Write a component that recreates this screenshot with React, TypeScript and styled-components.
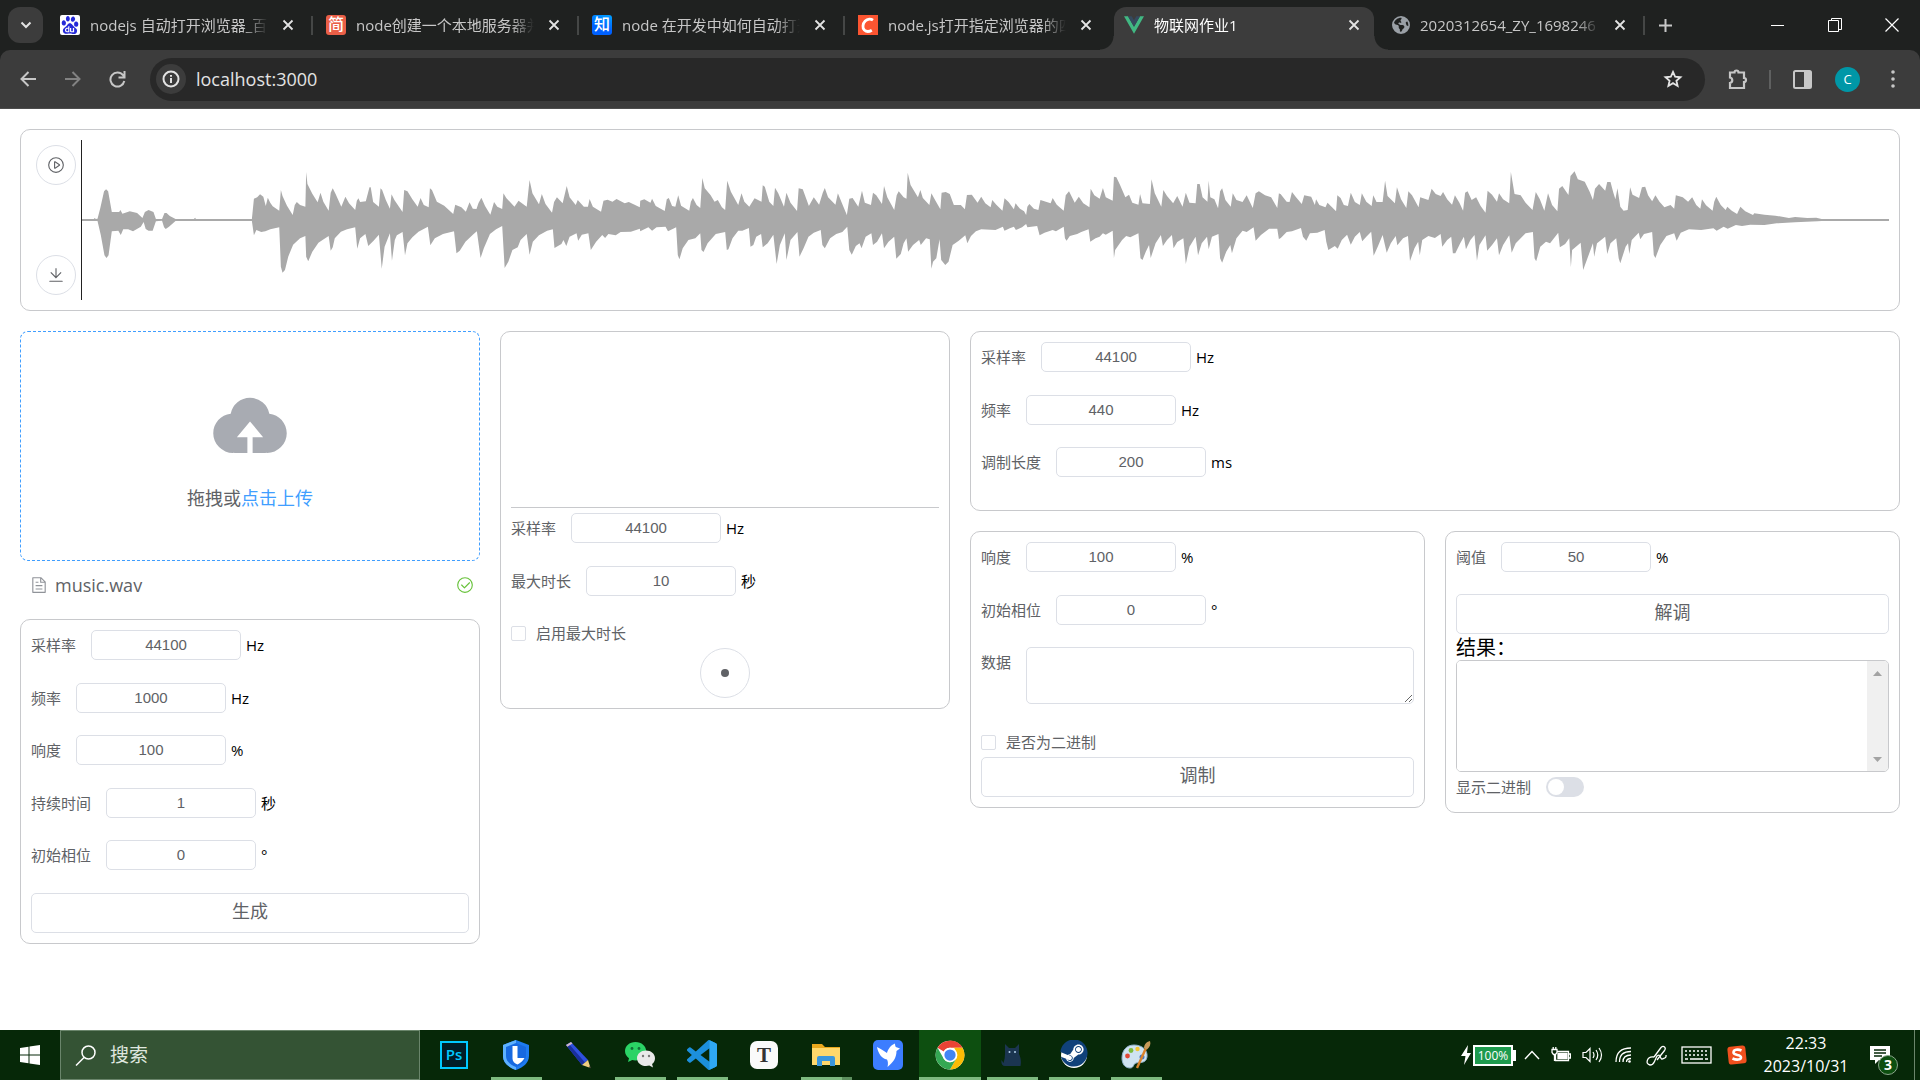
import React, { useId, useState } from 'react';
import styled, { createGlobalStyle, css } from 'styled-components';
import { SiBaidu } from 'react-icons/si';
import { FaSteam } from 'react-icons/fa';
import { FaEarthAmericas } from 'react-icons/fa6';

const uiFont = '"Open Sans", "Noto Sans CJK SC", sans-serif';
const valueFont = '"Liberation Sans", "Noto Sans CJK SC", sans-serif';

const GlobalStyle = createGlobalStyle`
  *, *::before, *::after { box-sizing: border-box; }
  body { margin: 0; background: #fff; font-family: ${uiFont}; }
  button, input, textarea { font: inherit; color: inherit; margin: 0; }
  button { padding: 0; border: 0; background: none; cursor: pointer; }
  svg { display: block; flex: none; }
`;

const Screen = styled.div`
  display: flex;
  flex-direction: column;
  min-height: 100vh;
`;

/* ---------- browser chrome ---------- */

const TabStrip = styled.div`
  display: flex;
  height: 50px;
  padding-left: 8px;
  background: #1f2120;
  color: #c7c7c7;
`;

const TabSearch = styled.button`
  display: grid;
  place-items: center;
  width: 35px;
  height: 36px;
  margin: 7px 7px 0 0;
  border-radius: 12px;
  background: #3c3c3c;
  color: #e3e3e3;
`;

const TabBox = styled.div<{ $active?: boolean; $divider?: boolean }>`
  position: relative;
  display: flex;
  align-items: center;
  flex: 0 1 266px;
  min-width: 0;
  height: 43px;
  margin-top: 7px;
  padding: 0 18px 8px 10px;
  ${p => p.$divider && css`
    &::after {
      content: '';
      position: absolute;
      right: 3px;
      top: 9px;
      width: 2px;
      height: 19px;
      background: #454746;
    }
  `}
  ${p => p.$active && css`
    flex-basis: 260px;
    margin-right: 8px;
    padding-right: 10px;
    border-radius: 12px 12px 0 0;
    background: #3c3c3c;
    color: #fff;
    &::before, &::after {
      content: '';
      position: absolute;
      bottom: 0;
      width: 14px;
      height: 14px;
    }
    &::before {
      left: -14px;
      background: radial-gradient(circle at 0 0, transparent 13px, #3c3c3c 14px);
    }
    &::after {
      right: -14px;
      background: radial-gradient(circle at 100% 0, transparent 13px, #3c3c3c 14px);
    }
  `}
`;

const TabTitle = styled.button`
  flex: 1;
  min-width: 0;
  margin-left: 10px;
  overflow: hidden;
  white-space: nowrap;
  text-align: left;
  font-size: 15px;
  line-height: 24px;
  mask-image: linear-gradient(to right, #000 calc(100% - 24px), transparent);
`;

const TabClose = styled.button`
  display: grid;
  place-items: center;
  width: 20px;
  height: 20px;
  margin-left: 10px;
  color: #e3e3e3;
`;

const NewTab = styled.button`
  display: grid;
  place-items: center;
  width: 34px;
  height: 50px;
`;

const WindowControls = styled.div`
  display: flex;
  margin-left: auto;
  color: #fff;
`;

const WindowButton = styled.button`
  display: grid;
  place-items: center;
  width: 57px;
  height: 50px;
`;

const ToolbarBack = styled.div`
  background: #1f2120;
`;

const Toolbar = styled.div`
  display: flex;
  align-items: center;
  height: 59px;
  padding: 0 5px;
  border-radius: 10px 10px 0 0;
  border-bottom: 1px solid #4d4d4d;
  background: #3c3c3c;
  color: #c7c7c7;
`;

const ToolButton = styled.button<{ $dim?: boolean }>`
  display: grid;
  place-items: center;
  width: 45px;
  height: 40px;
  opacity: ${p => (p.$dim ? 0.5 : 1)};
`;

const Omnibox = styled.div`
  display: flex;
  align-items: center;
  flex: 1;
  height: 43px;
  margin: 0 10px;
  padding: 0 22px 0 6px;
  border-radius: 22px;
  background: #282828;
  color: #e3e3e3;
`;

const SiteInfo = styled.button`
  display: grid;
  place-items: center;
  width: 30px;
  height: 30px;
  border-radius: 50%;
  background: #3c3c3c;
`;

const Address = styled.input`
  flex: 1;
  min-width: 0;
  margin-left: 10px;
  padding: 0;
  border: 0;
  outline: 0;
  background: none;
  font-size: 18px;
  line-height: 26px;
`;

const ToolDivider = styled.span`
  width: 2px;
  height: 19px;
  margin: 0 9px;
  background: #5f6060;
`;

const Avatar = styled.button`
  width: 25px;
  height: 25px;
  margin: 0 10px;
  border-radius: 50%;
  background: #0097a7;
  color: #fff;
  font-size: 13px;
  line-height: 25px;
`;

/* ---------- page ---------- */

const Page = styled.main`
  flex: 1;
  padding: 20px;
`;

const Card = styled.section`
  padding: 10px;
  border: 1px solid #c8c9cc;
  border-radius: 10px;
  background: #fff;
`;

const Player = styled(Card)`
  display: flex;
  padding: 10px 10px 10px 15px;
  margin-bottom: 20px;
`;

const PlayerButtons = styled.div`
  display: flex;
  flex-direction: column;
  justify-content: space-between;
  height: 160px;
  padding: 5px 5px 5px 0;
`;

const RoundButton = styled.button<{ $size: number }>`
  display: grid;
  place-items: center;
  width: ${p => p.$size}px;
  height: ${p => p.$size}px;
  border: 1px solid #dcdfe6;
  border-radius: 50%;
  color: #606266;
`;

const Playhead = styled.span`
  width: 1px;
  height: 160px;
  background: #222;
`;

const WaveSvg = styled.svg`
  flex: 1;
  min-width: 0;
  height: 160px;
`;

const Columns = styled.div`
  display: grid;
  grid-template-columns: 46fr 45fr 93fr;
  gap: 20px;
  align-items: start;
`;

const Stack = styled.div`
  display: grid;
  gap: 20px;
  min-width: 0;
`;

const Halves = styled.div`
  display: grid;
  grid-template-columns: 1fr 1fr;
  gap: 20px;
  align-items: start;
`;

const DropZone = styled.div`
  display: flex;
  flex-direction: column;
  align-items: center;
  gap: 20px;
  padding: 50px 10px;
  border: 1px dashed #409eff;
  border-radius: 8px;
  color: #606266;
  font-size: 18px;
  line-height: 24px;
`;

const UploadLink = styled.a`
  color: #409eff;
  text-decoration: none;
`;

const FileRow = styled.div`
  display: flex;
  align-items: center;
  gap: 7px;
  height: 32px;
  margin: 8px 0 18px;
  padding: 0 6px 0 10px;
  color: #606266;
  font-size: 18px;

  svg:last-child { margin-left: auto; }
`;

const Fields = styled.div<{ $minHeight: number }>`
  display: grid;
  grid-auto-rows: 1fr;
  min-height: ${p => p.$minHeight}px;
`;

const FieldRow = styled.div`
  display: flex;
  align-items: flex-start;
  min-height: 30px;
  font-size: 15px;
  line-height: 30px;
`;

const Label = styled.label`
  flex: none;
  padding-right: 15px;
  color: #606266;
`;

const NumberBox = styled.input`
  width: 150px;
  height: 30px;
  margin-right: 5px;
  padding: 0 8px;
  border: 1px solid #dcdfe6;
  border-radius: 5px;
  color: #606266;
  text-align: center;
  font-family: ${valueFont};
`;

const Unit = styled.span`
  color: #000;
`;

const DataRow = styled(FieldRow)`
  margin-bottom: 23px;
`;

const DataBox = styled.textarea`
  flex: 1;
  min-width: 0;
  height: 57px;
  padding: 4px 8px;
  border: 1px solid #dcdfe6;
  border-radius: 5px;
  color: #606266;
  line-height: 24px;
  resize: vertical;
`;

const CheckRow = styled.label`
  display: flex;
  align-items: center;
  gap: 10px;
  height: 30px;
  color: #606266;
  font-size: 15px;
  line-height: 30px;
`;

const CheckBox = styled.input`
  appearance: none;
  width: 15px;
  height: 15px;
  border: 1px solid #dcdfe6;
  border-radius: 2px;
  background: #fff;
  &:checked { background: #409eff; border-color: #409eff; }
`;

const WideButton = styled.button`
  display: block;
  width: 100%;
  height: 40px;
  padding-bottom: 4px;
  border: 1px solid #dcdfe6;
  border-radius: 5px;
  color: #606266;
  font-size: 18px;
  line-height: 34px;
`;

const Scope = styled.div`
  height: 166px;
  margin-bottom: 5px;
  border-bottom: 1px solid #c8c9cc;
`;

const RecordArea = styled.div`
  display: flex;
  justify-content: center;
`;

const Dot = styled.span`
  width: 8px;
  height: 8px;
  border-radius: 50%;
  background: #606266;
`;

const ResultLabel = styled.label`
  display: block;
  padding-top: 2px;
  color: #000;
  font-size: 20px;
  line-height: 24px;
`;

const ResultFrame = styled.div`
  display: flex;
  height: 112px;
  border: 1px solid #c8c9cc;
  border-radius: 5px;
  overflow: hidden;
`;

const ResultBox = styled.textarea`
  flex: 1;
  min-width: 0;
  border: 0;
  outline: 0;
  resize: none;
  font-size: 15px;
`;

const ScrollRail = styled.div`
  display: flex;
  flex-direction: column;
  justify-content: space-between;
  width: 21px;
  background: #f0f0f0;
  color: #a3a3a3;
`;

const ScrollArrow = styled.button`
  display: grid;
  place-items: center;
  height: 24px;
`;

const SwitchRow = styled.label`
  display: flex;
  align-items: center;
  gap: 15px;
  height: 30px;
  color: #606266;
  font-size: 15px;
  line-height: 30px;
`;

const Switch = styled.input`
  appearance: none;
  display: flex;
  align-items: center;
  width: 38px;
  height: 20px;
  padding: 0 2px;
  border-radius: 10px;
  background: #dcdfe6;
  &::before {
    content: '';
    width: 16px;
    height: 16px;
    border-radius: 50%;
    background: #fff;
  }
  &:checked { background: #409eff; justify-content: flex-end; }
`;

/* ---------- task bar ---------- */

const TaskBar = styled.footer`
  display: flex;
  align-items: stretch;
  height: 50px;
  background: #062808;
  color: #fff;
`;

const StartButton = styled.button`
  display: grid;
  place-items: center;
  width: 60px;
`;

const SearchBox = styled.label`
  display: flex;
  align-items: center;
  gap: 14px;
  width: 360px;
  padding: 0 14px;
  border: 1px solid #6a856b;
  background: #345334;
`;

const SearchInput = styled.input`
  flex: 1;
  min-width: 0;
  padding: 0;
  border: 0;
  outline: 0;
  background: none;
  font-size: 19px;
  &::placeholder { color: #dfe6df; opacity: 1; }
`;

const Apps = styled.div`
  display: flex;
  margin-left: 3px;
`;

const AppButton = styled.button<{ $state?: 'open' | 'active' | 'many' }>`
  display: grid;
  grid-template-rows: 1fr 3px;
  place-items: center;
  width: 62px;
  background: ${p => (p.$state === 'active' ? '#0d4f10' : 'none')};

  &::after {
    content: '';
    width: ${p => (p.$state === 'active' ? '62px' : '51px')};
    height: 3px;
    background: ${p =>
      !p.$state
        ? 'none'
        : p.$state === 'many'
          ? 'linear-gradient(to right, #7dba7f 41px, #5c8f5e 41px)'
          : '#7dba7f'};
  }
  svg { margin-top: 2px; }
`;

const Tray = styled.div`
  display: flex;
  align-items: center;
  margin-left: auto;
`;

const Battery = styled.span`
  display: flex;
  align-items: center;
  margin-right: 8px;
`;

const BatteryLevel = styled.span`
  width: 40px;
  height: 21px;
  border: 2px solid #fff;
  background: #1d9a4d;
  font-size: 12px;
  line-height: 17px;
  text-align: center;
`;

const BatteryTip = styled.span`
  width: 3px;
  height: 11px;
  background: #fff;
`;

const TrayButton = styled.button<{ $width?: number }>`
  display: grid;
  place-items: center;
  width: ${p => p.$width ?? 31}px;
  height: 50px;
`;

const Clock = styled.time`
  width: 104px;
  font-size: 16px;
  line-height: 23px;
  text-align: center;
`;

const Notices = styled.button`
  position: relative;
  display: grid;
  place-items: center;
  width: 44px;
  height: 50px;
`;

const NoticeCount = styled.span`
  position: absolute;
  left: 20px;
  top: 25px;
  width: 20px;
  height: 20px;
  border: 1px solid #8aa58b;
  border-radius: 50%;
  background: #0d4f10;
  font-size: 14px;
  font-weight: 700;
  line-height: 18px;
`;

const ShowDesktop = styled.button`
  width: 6px;
  height: 50px;
  margin-left: 12px;
  border-left: 1px solid #6a856b;
`;

/* ---------- drawings ---------- */

const CloseGlyph = () => (
  <svg width="12" height="12" viewBox="0 0 12 12" stroke="currentColor" strokeWidth="1.8">
    <path d="M1.5 1.5l9 9M10.500 1.500l-9 9" />
  </svg>
);

type PathIconProps = { size: number; color?: string; d: string[] };
const ElIcon = ({ size, color = 'currentColor', d }: PathIconProps) => (
  <svg width={size} height={size} viewBox="0 0 1024 1024" fill={color}>
    {d.map(p => <path key={p} d={p} />)}
  </svg>
);

const icons = {
  play: ['M512 64a448 448 0 1 1 0 896 448 448 0 0 1 0-896zm0 832a384 384 0 0 0 0-768 384 384 0 0 0 0 768zm-48-247.616L668.608 512 464 375.616v272.768zm10.624-342.656 249.472 166.336a48 48 0 0 1 0 79.872L474.624 718.272A48 48 0 0 1 400 678.336V345.6a48 48 0 0 1 74.624-39.936z'],
  download: ['M160 832h704a32 32 0 1 1 0 64H160a32 32 0 1 1 0-64zm384-253.696 236.288-236.352 45.248 45.248L508.8 704 192 387.2l45.248-45.248L480 584.704V128h64v450.304z'],
  upload: ['M544 864V672h128L512 480 352 672h128v192H320v-1.6c-5.376.32-10.496 1.6-16 1.6A240 240 0 0 1 64 624c0-123.136 93.12-223.488 212.608-237.248A239.808 239.808 0 0 1 512 192a239.872 239.872 0 0 1 235.456 194.752c119.488 13.76 212.48 114.112 212.48 237.248a240 240 0 0 1-240 240c-5.376 0-10.56-1.28-16-1.6v1.6H544z'],
  document: ['M832 384H576V128H192v768h640V384zm-26.496-64L640 154.496V320h165.504zM160 64h480l256 256v608a32 32 0 0 1-32 32H160a32 32 0 0 1-32-32V96a32 32 0 0 1 32-32zm160 448h384v64H320v-64zm0-192h160v64H320v-64zm0 384h384v64H320v-64z'],
  check: [
    'M512 896a384 384 0 1 0 0-768 384 384 0 0 0 0 768zm0 64a448 448 0 1 1 0-896 448 448 0 0 1 0 896z',
    'M745.344 361.344a32 32 0 0 1 45.312 45.312l-288 288a32 32 0 0 1-45.312 0l-160-160a32 32 0 1 1 45.312-45.312L480 626.752l265.344-265.344z',
  ],
};

/* Envelope of the loaded sound: three consecutive sections of 1568 samples,
   each a list of "sample,level" pairs around the rest level of 330. */
const SECTION = 1568;
const upper = [
  '201,327 230,327 232,324 235,327 239,326 246,293 255,244 260,238 265,244 274,306 292,306 295,300 300,311 318,304 336,309 349,324 355,306 364,300 376,306 382,327 397,327 403,309 408,309 416,318 430,327 475,327 478,323 480,327 617,327 622,266 630,262 637,253 645,260 651,288 656,263 662,278 668,289 684,302 688,240 692,258 703,287 717,315 722,285 727,276 735,285 748,290 750,186 753,222 765,251 778,277 785,248 792,275 805,302 810,248 815,235 822,252 836,290 846,260 855,280 870,300 874,272 878,265 882,276 896,274 905,232 908,232 914,276 928,290 932,235 936,240 945,270 955,296 959,253 966,270 986,306 990,240 998,244 1010,268 1023,290 1030,264 1038,285 1050,292 1053,235 1058,240 1070,275 1088,287 1110,312 1115,284 1130,292 1141,305 1150,277 1158,296 1167,297 1172,279 1179,263 1188,288 1201,314 1210,276 1218,290 1230,297 1233,250 1240,264 1260,290 1270,272 1290,290 1297,210 1304,250 1320,283 1327,252 1336,282 1352,308 1357,276 1364,262 1378,280 1388,228 1395,262 1410,285 1415,270 1430,290 1440,290 1444,267 1452,290 1472,305 1478,272 1488,269 1500,275 1510,267 1530,280 1540,276 1567,292',
  '0,272 10,268 25,278 29,266 38,288 60,303 65,268 70,264 78,288 86,290 93,256 100,287 120,302 124,275 129,264 138,285 147,294 152,204 158,235 172,255 182,275 190,270 200,292 208,300 213,212 222,245 240,285 248,250 255,275 267,290 280,265 297,275 300,226 305,230 316,275 326,288 330,233 338,250 352,290 358,248 368,278 384,303 388,235 398,238 413,288 425,262 438,284 447,248 452,234 460,262 478,284 484,250 494,280 506,315 512,266 520,264 534,290 543,242 550,278 565,285 570,248 578,256 592,282 597,228 605,262 622,300 628,256 633,244 645,262 652,266 655,188 662,225 680,262 686,240 692,264 708,285 713,250 722,270 735,298 738,248 748,246 758,252 768,285 785,285 795,298 800,255 812,254 826,278 835,260 845,280 858,292 862,270 872,284 887,302 892,265 902,276 915,298 919,280 930,296 940,304 945,315 948,290 953,282 964,296 975,300 980,270 1005,280 1010,264 1020,284 1037,302 1042,256 1050,244 1064,278 1074,260 1085,280 1100,292 1103,236 1112,256 1125,266 1133,234 1140,262 1157,272 1160,200 1166,202 1175,225 1188,262 1197,254 1205,278 1220,284 1224,252 1230,280 1248,282 1252,208 1260,250 1276,290 1281,240 1290,258 1305,280 1315,258 1328,290 1336,248 1345,278 1360,280 1364,222 1370,222 1377,262 1389,275 1392,212 1396,262 1406,268 1415,295 1420,244 1425,235 1433,270 1446,290 1451,250 1460,270 1475,276 1485,256 1500,294 1507,250 1515,244 1530,256 1545,262 1560,294 1564,250 1567,252',
  '0,252 15,275 22,276 28,246 38,262 52,282 58,256 75,260 84,285 87,268 95,285 110,292 115,278 136,304 139,256 147,264 155,285 165,288 172,248 182,276 194,285 199,250 210,275 223,288 227,256 235,276 250,276 256,212 262,258 280,280 285,232 295,268 308,294 313,244 322,256 338,292 342,262 362,270 370,236 380,252 392,258 398,246 408,268 420,284 427,256 438,278 447,302 452,248 458,244 468,270 479,262 490,288 502,308 507,242 518,254 530,275 535,250 545,268 560,280 564,186 573,252 588,256 600,278 617,300 625,246 635,268 646,302 655,250 665,285 678,304 682,236 690,228 705,255 710,198 720,184 728,208 745,215 757,245 765,270 770,236 780,222 795,242 800,216 808,216 815,248 820,268 825,235 832,290 840,302 850,300 856,232 862,254 878,264 885,232 893,230 900,256 910,274 918,256 928,275 940,292 955,285 964,296 968,256 985,262 998,275 1008,262 1018,285 1028,296 1032,268 1042,286 1058,302 1062,275 1067,260 1078,285 1090,300 1094,290 1105,302 1118,312 1126,290 1138,304 1157,315 1160,310 1185,314 1212,317 1245,324 1260,321 1290,324 1312,323 1325,327 1490,327',
];
const lower = [
  '201,333 239,333 247,375 256,436 261,444 266,436 274,364 290,362 296,375 302,358 314,358 326,364 345,350 352,336 357,357 364,362 374,362 382,334 397,332 402,352 406,357 414,350 430,333 617,333 622,376 628,360 640,366 650,364 662,358 684,352 688,470 692,488 698,480 706,440 718,404 735,385 748,378 750,440 755,454 765,425 780,398 790,390 805,378 810,422 815,412 820,385 835,365 850,358 870,352 875,416 882,385 895,372 902,408 915,392 928,374 935,476 942,410 955,370 960,452 967,390 972,376 986,366 992,436 998,400 1010,382 1025,365 1048,350 1054,406 1065,385 1085,372 1112,364 1118,430 1126,422 1140,395 1160,372 1168,364 1177,444 1185,415 1200,372 1215,358 1230,348 1236,474 1245,455 1255,420 1268,412 1275,390 1290,372 1297,434 1305,395 1320,376 1340,362 1354,358 1358,414 1375,402 1380,390 1387,408 1395,380 1412,370 1416,392 1425,374 1441,370 1447,420 1460,395 1475,375 1482,384 1490,372 1508,376 1520,366 1545,365 1567,356',
  '0,364 20,352 29,362 40,352 62,350 68,364 88,352 92,435 96,448 104,415 118,390 135,385 147,370 150,420 155,426 165,400 185,372 208,366 212,420 216,418 226,385 240,362 250,362 266,354 270,410 277,405 284,380 296,372 300,412 312,400 326,374 334,462 342,405 354,370 358,450 368,390 385,366 390,440 400,415 412,380 425,368 442,360 446,405 452,415 465,385 480,372 495,366 507,350 512,420 518,434 528,408 537,400 542,415 552,380 566,370 570,405 580,395 592,370 597,415 608,395 622,380 627,446 638,432 645,400 652,385 656,425 668,405 683,390 687,405 700,385 709,388 713,476 717,455 725,445 733,388 737,450 747,465 755,455 765,405 780,392 796,376 801,400 810,378 822,364 835,358 870,360 888,350 892,362 905,355 915,350 920,360 935,352 945,342 948,352 972,348 978,376 990,368 1010,360 1018,364 1037,350 1040,385 1044,392 1052,378 1070,372 1080,366 1098,358 1102,395 1115,385 1125,380 1133,370 1140,374 1157,362 1160,444 1163,420 1180,390 1190,378 1200,382 1220,370 1225,445 1230,450 1238,425 1246,405 1250,444 1262,400 1275,375 1280,408 1290,390 1302,375 1306,415 1315,396 1330,385 1336,462 1345,410 1360,380 1366,436 1375,400 1388,380 1392,418 1400,380 1416,372 1420,445 1425,458 1435,425 1445,405 1449,430 1460,385 1475,362 1485,366 1502,352 1507,392 1520,375 1540,356 1560,356 1564,388 1567,385',
  '0,385 15,366 28,364 50,354 55,380 63,392 72,370 90,368 108,360 112,395 117,420 133,408 140,416 150,390 163,374 172,404 182,380 194,366 200,394 210,380 222,365 228,437 238,410 250,375 260,428 270,400 282,378 286,406 300,385 312,378 317,453 328,415 337,395 341,436 347,390 362,378 378,384 392,372 396,410 408,390 418,380 422,430 428,430 440,400 449,380 454,418 465,390 475,375 481,452 487,405 502,376 506,422 518,405 530,385 535,436 545,405 560,376 566,428 576,400 600,370 618,366 622,445 626,454 636,410 650,395 660,400 680,368 684,412 697,402 707,385 711,472 714,420 735,398 741,480 750,450 765,400 768,440 775,400 795,380 800,432 808,400 822,385 828,445 832,460 845,410 851,400 854,432 860,390 877,368 881,388 890,372 910,366 914,435 918,444 930,405 945,378 964,370 970,392 980,368 1000,358 1030,360 1060,355 1068,362 1085,350 1095,356 1115,345 1130,348 1150,344 1185,345 1215,340 1260,337 1315,334 1325,333 1490,333',
];

const joinSections = (sections: string[]) =>
  sections.flatMap((section, i) =>
    section.split(' ').map(pair => {
      const [x, y] = pair.split(',').map(Number);
      return `${x + i * SECTION},${y}`;
    }),
  );
const envelope = [...joinSections(upper), ...joinSections(lower).reverse()].join(' ');

const Waveform = () => (
  <WaveSvg viewBox="201 90 4425 480" preserveAspectRatio="none" role="img" aria-label="music.wav">
    <polygon points={envelope} fill="#a9a9a9" />
  </WaveSvg>
);

const BaiduIcon = () => (
  <svg width="20" height="20" viewBox="0 0 20 20">
    <rect width="20" height="20" rx="2" fill="#fff" />
    <SiBaidu x="1" y="1" size={18} color="#2529d8" />
  </svg>
);

const Badge = styled.span<{ $bg: string; $round?: boolean }>`
  flex: none;
  width: 20px;
  height: 20px;
  border-radius: ${p => (p.$round ? 3 : 0)}px;
  background: ${p => p.$bg};
  color: #fff;
  font-size: 16px;
  font-weight: 500;
  line-height: 19px;
  text-align: center;
`;

const CsdnIcon = () => (
  <svg width="20" height="20" viewBox="0 0 20 20">
    <rect width="20" height="20" fill="#fc5531" />
    <path d="M15 5.200C13 3.800 9.500 3.800 7.200 6 4.500 8.800 4.300 13 6.300 15c1.800 1.700 5 1.700 7.500.2" fill="none" stroke="#fff" strokeWidth="2.800" />
  </svg>
);

const VueIcon = () => (
  <svg width="20" height="18" viewBox="0 0 20 17.300">
    <path d="M0 0h4l6 10.400L16 0h4L10 17.300z" fill="#41b883" />
    <path d="M4 0h3.700L10 4l2.300-4H16l-6 10.400z" fill="#35495e" />
  </svg>
);

const tabs = [
  { title: 'nodejs 自动打开浏览器_百度搜索', icon: <BaiduIcon />, divider: true },
  { title: 'node创建一个本地服务器并打开', icon: <Badge $bg="#ea5f47" $round>简</Badge>, divider: true },
  { title: 'node 在开发中如何自动打开浏览器', icon: <Badge $bg="linear-gradient(200deg,#00a2ff,#0061ff 60%)" $round>知</Badge>, divider: true },
  { title: 'node.js打开指定浏览器的四种方法', icon: <CsdnIcon />, divider: false },
  { title: '物联网作业1', icon: <VueIcon />, divider: false, active: true },
  { title: '2020312654_ZY_1698246', icon: <FaEarthAmericas size={18} color="#9aa0a6" />, divider: true },
];

const PsIcon = () => (
  <svg width="28" height="28" viewBox="0 0 28 28">
    <rect x="1" y="1" width="26" height="26" fill="#001d26" stroke="#00c8ff" strokeWidth="2" />
    <text x="14" y="19" textAnchor="middle" fontFamily="Open Sans, sans-serif" fontSize="15" fontWeight="600" fill="#00c8ff">Ps</text>
  </svg>
);
const ShieldIcon = () => (
  <svg width="28" height="30" viewBox="0 0 28 30">
    <path d="M14 0l13 5v11c0 7-6 11.500-13 14C7 27.500 1 23 1 16V5z" fill="#1e7bf0" />
    <path d="M14 0L1 5v11c0 7 6 11.500 13 14z" fill="#5db1ff" />
    <path d="M14 3l10 4v9c0 5-4.500 9-10 11C8.500 25 4 21 4 16V7z" fill="#1769e0" />
    <path d="M10.500 6h5v12h7c-1.500 3-4 5-7 6.500-3-1-5-3-5-6z" fill="#fff" />
  </svg>
);
const PenIcon = () => (
  <svg width="28" height="28" viewBox="0 0 28 28">
    <path d="M2 4l5-3 17 18-6 5z" fill="#2f50dd" />
    <path d="M2 4l2.500-1.500L21 21.500 18 24z" fill="#1a2f9c" />
    <path d="M2 4l5-3 1.500 1.600L3.300 5.700z" fill="#cdb4c8" />
    <path d="M18 24l6-5 2.500 8z" fill="#f0cd82" />
    <path d="M24.600 26.200l1.600-1.200.8 2.500z" fill="#333" />
  </svg>
);
const WechatIcon = () => (
  <svg width="32" height="28" viewBox="0 0 32 28">
    <path d="M11.500 1C5.300 1 1 5 1 10c0 3 1.500 5.500 4 7.200L4 21l4.200-2c6 1.500 14-1.500 14-9C22 5 17.700 1 11.500 1z" fill="#2bd366" />
    <circle cx="8" cy="7.500" r="1.400" fill="#11713a" /><circle cx="15" cy="7.500" r="1.400" fill="#11713a" />
    <path d="M22 9.500c-5 0-9 3.300-9 7.700s4 7.800 9 7.800c1.200 0 2.300-.2 3.300-.5L29 26.500l-.9-3.500c1.800-1.400 2.900-3.400 2.900-5.800 0-4.400-4-7.700-9-7.700z" fill="#e9e9e9" />
    <circle cx="19" cy="15" r="1.200" fill="#777" /><circle cx="25" cy="15" r="1.200" fill="#777" />
  </svg>
);
const CodeIcon = () => (
  <svg width="30" height="30" viewBox="0 0 24 24">
    <path d="M23.150 2.587L18.210.210a1.494 1.494 0 0 0-1.705.290l-9.460 8.630-4.120-3.128a.999.999 0 0 0-1.276.057L.327 7.261A1 1 0 0 0 .326 8.740L3.899 12 .326 15.260a1 1 0 0 0 .001 1.479L1.650 17.940a.999.999 0 0 0 1.276.057l4.120-3.128 9.460 8.630a1.492 1.492 0 0 0 1.704.290l4.942-2.377A1.500 1.500 0 0 0 24 20.060V3.939a1.500 1.500 0 0 0-.850-1.352zm-5.146 14.861L10.826 12l7.178-5.448v10.896z" fill="#1c8fdc" />
    <path d="M18 .2l5.150 2.387A1.500 1.500 0 0 1 24 3.940v16.120a1.500 1.500 0 0 1-.85 1.353L18 23.800z" fill="#2fa8f5" />
  </svg>
);
const TyporaIcon = () => (
  <svg width="30" height="30" viewBox="0 0 30 30">
    <rect x="1" y="1" width="28" height="28" rx="7" fill="#fafafa" />
    <text x="15" y="22" textAnchor="middle" fontFamily="Liberation Serif, serif" fontSize="21" fontWeight="700" fill="#333">T</text>
  </svg>
);
const FolderIcon = () => (
  <svg width="28" height="24" viewBox="0 0 28 24">
    <path d="M0 1h10l3 3h15v18H0z" fill="#e9a81d" />
    <path d="M0 5h28v17H0z" fill="#ffd86b" />
    <path d="M5 23v-8a2 2 0 0 1 2-2h14a2 2 0 0 1 2 2v8h-5v-5h-8v5z" fill="#3b97dc" />
  </svg>
);
const BirdIcon = () => (
  <svg width="30" height="30" viewBox="0 0 30 30">
    <rect width="30" height="30" rx="5" fill="#3c7dff" />
    <path d="M4 7c4 2 7 4 10 6C15 9 18 5 22 3.500c0 1.500.3 2.500.8 3.500L27 8.500l-3.500 2.500c0 7-3.500 11.500-9 16 .8-3.500.5-5.500-.5-7.500C8.500 18.500 5 13 4 7z" fill="#fff" />
  </svg>
);
const ChromeIcon = () => (
  <svg width="30" height="30" viewBox="0 0 48 48">
    <circle cx="24" cy="24" r="23" fill="#fff" />
    <path d="M24 1a23 23 0 0 1 20 11.500H24a11.500 11.500 0 0 0-10 5.800L4.100 12.500A23 23 0 0 1 24 1z" fill="#ea4335" />
    <path d="M44 12.500A23 23 0 0 1 24 47l10-17.200a11.500 11.500 0 0 0 0-11.500l-3.500-5.800z" fill="#fbbc05" />
    <path d="M24 47A23 23 0 0 1 4.100 12.500L14 29.800a11.500 11.500 0 0 0 15.800 4.200l4.200-4.200z" fill="#34a853" />
    <circle cx="24" cy="24" r="11.500" fill="#fff" />
    <circle cx="24" cy="24" r="9" fill="#4285f4" />
  </svg>
);
const CatIcon = () => (
  <svg width="24" height="24" viewBox="0 0 24 24">
    <path d="M5 1l4 4h6l4-4v10c1.500 3 2.500 7 1.500 12H5c-3 0-4-3-3.500-6l2 3c1-3 1.500-6 1.500-9z" fill="#1b3550" />
    <circle cx="9.500" cy="9" r="1" fill="#b5d3ea" /><circle cx="15" cy="9" r="1" fill="#b5d3ea" />
  </svg>
);
const SteamIcon = () => (
  <svg width="30" height="30" viewBox="0 0 30 30">
    <circle cx="15" cy="15" r="13" fill="#fff" />
    <FaSteam x="1" y="-1" size={28} color="#10417a" />
  </svg>
);
const PaintIcon = () => (
  <svg width="32" height="30" viewBox="0 0 32 30">
    <path d="M14 5C6 5 2 11 2 18c0 6 3 10 8 10 4 0 3-4 6-5s10 1 11-6C28 10 22 5 14 5z" fill="#cfe3f1" stroke="#8fb2c9" />
    <circle cx="7.500" cy="16" r="2.400" fill="#e04836" /><circle cx="11" cy="10.500" r="2.400" fill="#7dbb3d" />
    <circle cx="17.500" cy="9" r="2.200" fill="#f4c534" /><circle cx="22" cy="17" r="2.500" fill="#3c77c9" />
    <path d="M26 8L17 28" stroke="#d9822b" strokeWidth="2.400" />
    <path d="M24 8c0-3 2-6 6-7 1 3 0 6-3 8.500z" fill="#c79a5a" />
  </svg>
);

const apps: { name: string; icon: React.ReactNode; state?: 'open' | 'active' | 'many' }[] = [
  { name: 'Photoshop', icon: <PsIcon /> },
  { name: '电脑管家', icon: <ShieldIcon />, state: 'open' },
  { name: '画笔', icon: <PenIcon /> },
  { name: '微信', icon: <WechatIcon />, state: 'open' },
  { name: 'Visual Studio Code', icon: <CodeIcon />, state: 'open' },
  { name: 'Typora', icon: <TyporaIcon /> },
  { name: '文件资源管理器', icon: <FolderIcon />, state: 'many' },
  { name: '飞鸟', icon: <BirdIcon /> },
  { name: 'Chrome', icon: <ChromeIcon />, state: 'active' },
  { name: 'Clash', icon: <CatIcon />, state: 'open' },
  { name: 'Steam', icon: <SteamIcon />, state: 'open' },
  { name: '画图', icon: <PaintIcon />, state: 'open' },
];

/* ---------- composed parts ---------- */

const Field = ({ label, value, unit }: { label: string; value: string; unit: string }) => {
  const id = useId();
  const [current, setCurrent] = useState(value);
  return (
    <FieldRow>
      <Label htmlFor={id}>{label}</Label>
      <NumberBox id={id} inputMode="numeric" value={current} onChange={e => setCurrent(e.target.value)} />
      <Unit>{unit}</Unit>
    </FieldRow>
  );
};

const BrowserChrome = () => (
  <header>
    <TabStrip>
      <TabSearch aria-label="搜索标签页">
        <svg width="12" height="8" viewBox="0 0 12 8" fill="none" stroke="currentColor" strokeWidth="2">
          <path d="M1.500 1.500L6 6l4.500-4.500" />
        </svg>
      </TabSearch>
      {tabs.map(tab => (
        <TabBox key={tab.title} $active={tab.active} $divider={tab.divider}>
          {tab.icon}
          <TabTitle>{tab.title}</TabTitle>
          <TabClose aria-label="关闭标签页"><CloseGlyph /></TabClose>
        </TabBox>
      ))}
      <NewTab aria-label="新建标签页">
        <svg width="13" height="13" viewBox="0 0 13 13" stroke="currentColor" strokeWidth="2"><path d="M6.500 0v13M0 6.500h13" /></svg>
      </NewTab>
      <WindowControls>
        <WindowButton aria-label="最小化">
          <svg width="13" height="13" viewBox="0 0 13 13" stroke="currentColor"><path d="M0 6.500h13" /></svg>
        </WindowButton>
        <WindowButton aria-label="还原">
          <svg width="14" height="14" viewBox="0 0 14 14" fill="none" stroke="currentColor"><path d="M.5 2.500h10v11H.5zM3.500 2.500v-2h10v11h-3" /></svg>
        </WindowButton>
        <WindowButton aria-label="关闭">
          <svg width="14" height="14" viewBox="0 0 14 14" stroke="currentColor" strokeWidth="1.200"><path d="M.5.5l13 13M13.500.500l-13 13" /></svg>
        </WindowButton>
      </WindowControls>
    </TabStrip>
    <ToolbarBack>
      <Toolbar>
        <ToolButton aria-label="后退">
          <svg width="16" height="16" viewBox="0 0 16 16" fill="none" stroke="currentColor" strokeWidth="2"><path d="M16 8H1.500M8.500 1L1.500 8l7 7" /></svg>
        </ToolButton>
        <ToolButton aria-label="前进" $dim>
          <svg width="16" height="16" viewBox="0 0 16 16" fill="none" stroke="currentColor" strokeWidth="2"><path d="M0 8h14.500M7.500 1l7 7-7 7" /></svg>
        </ToolButton>
        <ToolButton aria-label="重新加载">
          <svg width="17" height="17" viewBox="0 0 17 17" fill="none" stroke="currentColor" strokeWidth="2"><path d="M15.300 10A7 7 0 1 1 14 4.200L15.500 6M15.500 0v6.500H9.500" /></svg>
        </ToolButton>
        <Omnibox>
          <SiteInfo aria-label="查看网站信息">
            <svg width="18" height="18" viewBox="0 0 18 18" fill="none" stroke="currentColor" strokeWidth="2"><circle cx="9" cy="9" r="7.500" /><path d="M9 8v5M9 5v1.800" /></svg>
          </SiteInfo>
          <Address aria-label="地址" defaultValue="localhost:3000" spellCheck={false} />
          <button aria-label="收藏">
            <svg width="20" height="20" viewBox="0 0 24 24" fill="none" stroke="currentColor" strokeWidth="2.200"><path d="M12 3.500l2.600 5.800 6.300.600-4.800 4.200 1.400 6.200-5.500-3.300-5.500 3.300 1.400-6.200-4.800-4.200 6.300-.600z" /></svg>
          </button>
        </Omnibox>
        <ToolButton aria-label="扩展程序">
          <svg width="22" height="22" viewBox="0 0 22 22" fill="none" stroke="currentColor" strokeWidth="2.200"><path d="M3 4.500h4.500a2 2 0 0 1 4 0H17v5.500a2 2 0 0 1 0 4V20H3v-5a2.800 2.800 0 0 0 0-5.500z" /></svg>
        </ToolButton>
        <ToolDivider />
        <ToolButton aria-label="侧边栏">
          <svg width="19" height="19" viewBox="0 0 19 19"><rect x="1" y="1" width="17" height="17" rx="1.500" fill="none" stroke="currentColor" strokeWidth="2" /><path d="M11 1h7v17h-7z" fill="currentColor" /></svg>
        </ToolButton>
        <Avatar aria-label="用户">C</Avatar>
        <ToolButton aria-label="菜单">
          <svg width="4" height="18" viewBox="0 0 4 18" fill="currentColor"><circle cx="2" cy="2" r="1.800" /><circle cx="2" cy="9" r="1.800" /><circle cx="2" cy="16" r="1.800" /></svg>
        </ToolButton>
      </Toolbar>
    </ToolbarBack>
  </header>
);

const DesktopBar = () => (
  <TaskBar>
    <StartButton aria-label="开始">
      <svg width="20" height="20" viewBox="0 0 20 20" fill="#fff"><path d="M0 3l8.500-1.200v7.700H0zM9.500 1.600L20 0v9.500H9.500zM0 10.500h8.500v7.700L0 17zM9.500 10.500H20V20L9.500 18.400z" /></svg>
    </StartButton>
    <SearchBox>
      <svg width="21" height="21" viewBox="0 0 21 21" fill="none" stroke="#fff" strokeWidth="1.500"><circle cx="13.500" cy="7.500" r="6.500" /><path d="M9 12.500L1 20.500" /></svg>
      <SearchInput placeholder="搜索" aria-label="搜索" />
    </SearchBox>
    <Apps>
      {apps.map(app => (
        <AppButton key={app.name} aria-label={app.name} $state={app.state}>{app.icon}</AppButton>
      ))}
    </Apps>
    <Tray>
      <Battery>
        <svg width="13" height="22" viewBox="0 0 13 22" fill="#fff"><path d="M8 1L1 12h4.500L4 21l7-12H7z" /></svg>
        <BatteryLevel>100%</BatteryLevel>
        <BatteryTip />
      </Battery>
      <TrayButton $width={16} aria-label="显示隐藏的图标">
        <svg width="16" height="10" viewBox="0 0 16 10" fill="none" stroke="#fff" strokeWidth="1.400"><path d="M1 9l7-7.500L15 9" /></svg>
      </TrayButton>
      <TrayButton $width={42} aria-label="电源">
        <svg width="20" height="16" viewBox="0 0 20 16" fill="none" stroke="#fff" strokeWidth="1.300"><path d="M6 4.500h11.500v9H4.500V8M18 7h1.500v4H18M1 2.500h5v3l-1.500 2h-2L1 5.500zM2.200 0v2.500M4.800 0v2.500M3.500 7.500V14" /><path d="M7 6.500h9v5H7z" fill="#fff" /></svg>
      </TrayButton>
      <TrayButton $width={19} aria-label="音量">
        <svg width="21" height="18" viewBox="0 0 21 18" fill="none" stroke="#fff" strokeWidth="1.200"><path d="M1 6.500h3l4-4v13l-4-4H1zM11 6q2 3 0 6M14 4q3.500 5 0 10M17 2q5 7 0 14" /></svg>
      </TrayButton>
      <TrayButton $width={43} aria-label="网络">
        <svg width="18" height="18" viewBox="0 0 18 18" fill="none" stroke="#fff" strokeWidth="1.300"><path d="M2 16Q2 2 17 2M5.500 16Q5.500 5.500 17 5.500M9 16Q9 9 17 9M12.500 16q0-3.500 4.500-3.500" /><circle cx="15.500" cy="15.500" r="1.300" fill="#fff" stroke="none" /></svg>
      </TrayButton>
      <TrayButton $width={24} aria-label="墨迹工作区">
        <svg width="21" height="21" viewBox="0 0 21 21" fill="none" stroke="#fff" strokeWidth="1.300"><path d="M8 12L15 2.500q2-2 3.500-.5t0 3.500L11 15M8 12q-5-1-6.500 3T4 20q3 0 4.500-3.500T11 11q3-2 3.500 1t3 1.500q3-.5 2.500-3.500" /></svg>
      </TrayButton>
      <TrayButton $width={56} aria-label="触摸键盘">
        <svg width="31" height="18" viewBox="0 0 31 18" fill="none" stroke="#fff" strokeWidth="1.300"><rect x="1" y="1" width="29" height="16" /><path d="M4 5h23M4 9h23" strokeDasharray="2 2" /><path d="M4 13h3M9 13h13M24 13h3" /></svg>
      </TrayButton>
      <TrayButton $width={26} aria-label="输入法">
        <svg width="20" height="20" viewBox="0 0 20 20"><rect x="1" y="1" width="18" height="18" rx="3" fill="#f0501e" transform="rotate(-6 10 10)" /><path d="M14.500 5.500C11 4 6.500 4.500 6.500 7.500c0 3.200 7.500 1.800 7.500 4.800 0 2.700-4.500 2.900-8.500 1.200" fill="none" stroke="#fff" strokeWidth="2.600" /></svg>
      </TrayButton>
      <TrayButton as="span" $width={4} />
      <Clock>22:33<br />2023/10/31</Clock>
      <Notices aria-label="通知">
        <svg width="20" height="20" viewBox="0 0 20 20"><path d="M0 1h20v14H9l-4 4v-4H0z" fill="#fff" /><path d="M4 5h12M4 8h12M4 11h8" stroke="#062808" strokeWidth="1.300" /></svg>
        <NoticeCount>3</NoticeCount>
      </Notices>
      <ShowDesktop aria-label="显示桌面" />
    </Tray>
  </TaskBar>
);

const App = () => (
  <Screen>
    <GlobalStyle />
    <BrowserChrome />
    <Page>
      <Player>
        <PlayerButtons>
          <RoundButton $size={40} aria-label="播放"><ElIcon size={18} d={icons.play} /></RoundButton>
          <RoundButton $size={40} aria-label="下载"><ElIcon size={18} d={icons.download} /></RoundButton>
        </PlayerButtons>
        <Playhead />
        <Waveform />
      </Player>

      <Columns>
        <div>
          <DropZone>
            <ElIcon size={84} color="#a8abb2" d={icons.upload} />
            <span>拖拽或<UploadLink href="#upload">点击上传</UploadLink></span>
          </DropZone>
          <FileRow>
            <ElIcon size={18} color="#909399" d={icons.document} />
            <span>music.wav</span>
            <ElIcon size={18} color="#67c23a" d={icons.check} />
          </FileRow>
          <Card>
            <Fields $minHeight={263}>
              <Field label="采样率" value="44100" unit="Hz" />
              <Field label="频率" value="1000" unit="Hz" />
              <Field label="响度" value="100" unit="%" />
              <Field label="持续时间" value="1" unit="秒" />
              <Field label="初始相位" value="0" unit="°" />
            </Fields>
            <WideButton>生成</WideButton>
          </Card>
        </div>

        <Card>
          <Scope />
          <Fields $minHeight={105}>
            <Field label="采样率" value="44100" unit="Hz" />
            <Field label="最大时长" value="10" unit="秒" />
          </Fields>
          <CheckRow><CheckBox type="checkbox" />启用最大时长</CheckRow>
          <RecordArea>
            <RoundButton $size={50} aria-label="录音"><Dot /></RoundButton>
          </RecordArea>
        </Card>

        <Stack>
          <Card>
            <Fields $minHeight={158}>
              <Field label="采样率" value="44100" unit="Hz" />
              <Field label="频率" value="440" unit="Hz" />
              <Field label="调制长度" value="200" unit="ms" />
            </Fields>
          </Card>
          <Halves>
            <Card>
              <Fields $minHeight={105}>
                <Field label="响度" value="100" unit="%" />
                <Field label="初始相位" value="0" unit="°" />
              </Fields>
              <DataRow>
                <Label htmlFor="data">数据</Label>
                <DataBox id="data" />
              </DataRow>
              <CheckRow><CheckBox type="checkbox" />是否为二进制</CheckRow>
              <WideButton>调制</WideButton>
            </Card>
            <Card>
              <Fields $minHeight={52}>
                <Field label="阈值" value="50" unit="%" />
              </Fields>
              <WideButton>解调</WideButton>
              <ResultLabel htmlFor="result">结果：</ResultLabel>
              <ResultFrame>
                <ResultBox id="result" readOnly />
                <ScrollRail>
                  <ScrollArrow aria-label="向上滚动">
                    <svg width="9" height="5" viewBox="0 0 9 5" fill="currentColor"><path d="M0 5L4.500 0 9 5z" /></svg>
                  </ScrollArrow>
                  <ScrollArrow aria-label="向下滚动">
                    <svg width="9" height="5" viewBox="0 0 9 5" fill="currentColor"><path d="M0 0h9L4.500 5z" /></svg>
                  </ScrollArrow>
                </ScrollRail>
              </ResultFrame>
              <SwitchRow>显示二进制<Switch type="checkbox" role="switch" /></SwitchRow>
            </Card>
          </Halves>
        </Stack>
      </Columns>
    </Page>
    <DesktopBar />
  </Screen>
);

export default App;
